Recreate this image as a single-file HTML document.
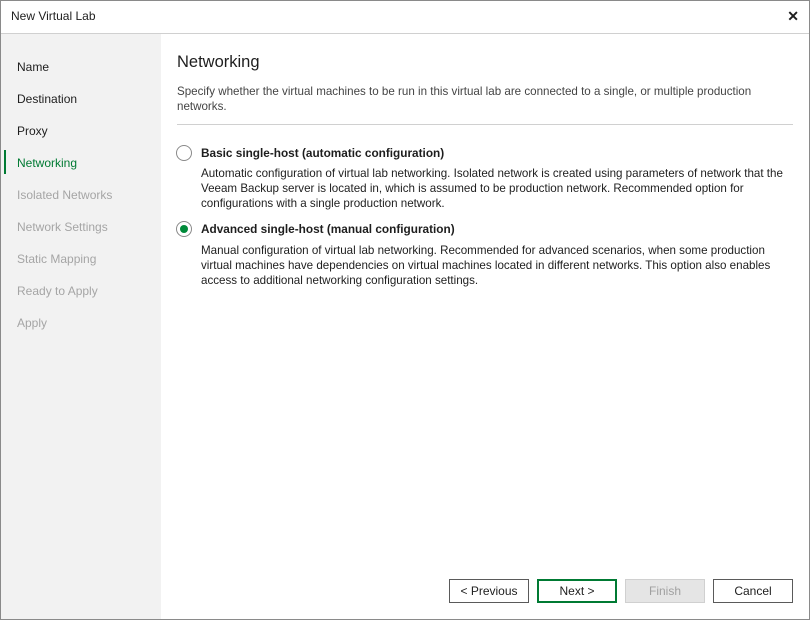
<!DOCTYPE html>
<html><head><style>
*{margin:0;padding:0;box-sizing:border-box}
body{width:810px;height:620px;background:#fff;font-family:"Liberation Sans",sans-serif;font-size:12px;color:#1e1e1e;position:relative;overflow:hidden}
.win{position:absolute;left:0;top:0;width:810px;height:620px;border:1px solid #8a8a8a}
.title{position:absolute;left:11px;top:9px;font-size:12px}
.close{position:absolute;right:11px;top:8px;font-size:14px;font-weight:bold}
.hline{position:absolute;left:1px;right:1px;top:33px;height:1px;background:#d0d0d0}
.side{position:absolute;left:1px;top:34px;width:160px;bottom:1px;background:#f2f2f2}
.nav{position:absolute;left:17px;font-size:12px}
.dis{color:#a5a5a5}
.act{color:#007a33}
.bar{position:absolute;left:4px;top:150px;width:2px;height:24px;background:#007a33}
h1{position:absolute;left:177px;top:53px;font-size:16.5px;font-weight:normal}
.desc{position:absolute;left:177px;top:84px;width:610px;line-height:15px;color:#444;font-size:11.6px}
.sep{position:absolute;left:177px;top:124px;width:616px;height:1px;background:#d0d0d0}
.radio{position:absolute;left:176px;width:16px;height:16px;border:1px solid #8a8a8a;border-radius:50%;background:#fff}
.radio.on::after{content:"";position:absolute;left:3px;top:3px;width:8px;height:8px;border-radius:50%;background:#008a3a}
.lbl{position:absolute;left:201px;font-weight:bold;font-size:11.8px}
.txt{position:absolute;left:201px;width:595px;line-height:15px;font-size:11.6px}
.btn{position:absolute;top:579px;width:80px;height:24px;border:1px solid #5a5a5a;background:#fff;text-align:center;line-height:22px;font-size:12px}
</style></head><body>
<div class="win"></div>
<div class="title">New Virtual Lab</div>
<div class="close">✕</div>
<div class="hline"></div>
<div class="side"></div>
<div class="nav" style="top:60px">Name</div>
<div class="nav" style="top:92px">Destination</div>
<div class="nav" style="top:124px">Proxy</div>
<div class="bar"></div>
<div class="nav act" style="top:156px">Networking</div>
<div class="nav dis" style="top:188px">Isolated Networks</div>
<div class="nav dis" style="top:220px">Network Settings</div>
<div class="nav dis" style="top:252px">Static Mapping</div>
<div class="nav dis" style="top:284px">Ready to Apply</div>
<div class="nav dis" style="top:316px">Apply</div>
<h1>Networking</h1>
<div class="desc">Specify whether the virtual machines to be run in this virtual lab are connected to a single, or multiple production networks.</div>
<div class="sep"></div>
<div class="radio" style="top:145px"></div>
<div class="lbl" style="top:146px">Basic single-host (automatic configuration)</div>
<div class="txt" style="top:166px">Automatic configuration of virtual lab networking. Isolated network is created using parameters of network that the Veeam Backup server is located in, which is assumed to be production network. Recommended option for configurations with a single production network.</div>
<div class="radio on" style="top:221px"></div>
<div class="lbl" style="top:222px">Advanced single-host (manual configuration)</div>
<div class="txt" style="top:243px">Manual configuration of virtual lab networking. Recommended for advanced scenarios, when some production virtual machines have dependencies on virtual machines located in different networks. This option also enables access to additional networking configuration settings.</div>
<div class="btn" style="left:449px">&lt; Previous</div>
<div class="btn" style="left:537px;border:2px solid #007a33;line-height:20px">Next &gt;</div>
<div class="btn" style="left:625px;background:#e5e5e5;border-color:#d0d0d0;color:#a0a0a0">Finish</div>
<div class="btn" style="left:713px">Cancel</div>
</body></html>
